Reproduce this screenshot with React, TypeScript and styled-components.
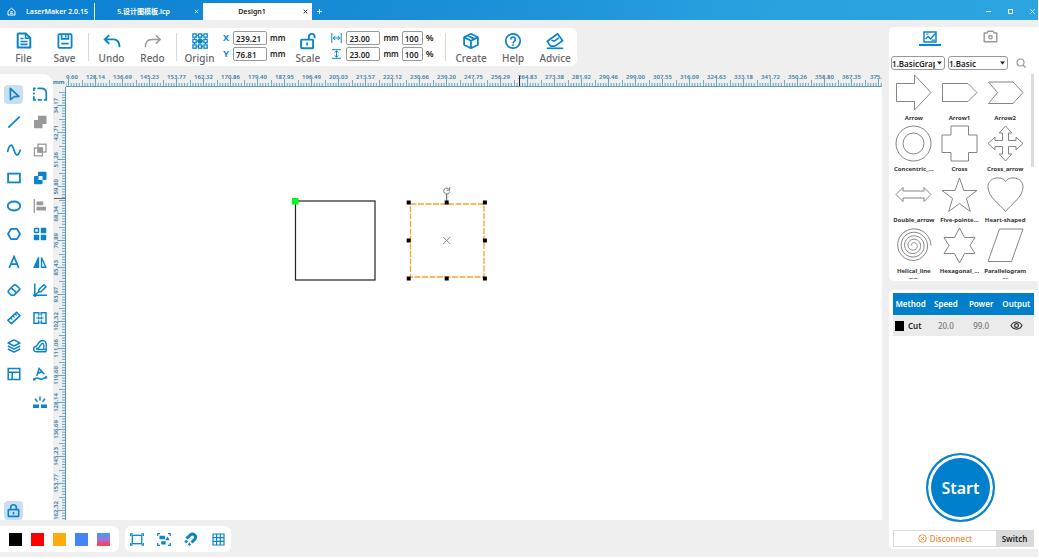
import React from "react";
import styled, { createGlobalStyle } from "styled-components";

const blue = "#0a84cc";
const grey = "#9a9a9a";

const GlobalStyle = createGlobalStyle`
  * { box-sizing: border-box; }
  body {
    margin: 0;
    background: #fff;
    font-family: "Noto Sans", "Noto Sans CJK SC", sans-serif;
    color: #222;
  }
  button, input, select { font-family: inherit; margin: 0; padding: 0; }
  button { border: 0; background: none; cursor: pointer; }
  svg { display: block; flex: none; }
`;

const Shell = styled.div`
  display: flex;
  flex-direction: column;
  height: 100vh;
  min-height: 480px;
  border: solid #fff;
  border-width: 0 1px 2px 0;
  background: #efefef;
  overflow: hidden;
`;

/* ---------- title bar ---------- */

const TitleBar = styled.header`
  display: flex;
  flex: none;
  align-items: flex-end;
  height: 20px;
  background: linear-gradient(100deg, #0b7fd1 0%, #1d92d9 50%, #2aa2df 75%, #2ba4e0 100%);
  color: #fff;
`;

const AppName = styled.div`
  display: flex;
  align-items: center;
  gap: 10px;
  width: 95px;
  height: 17px;
  padding-left: 7px;
  border-right: 1px solid #e8f4fc;
  font-size: 7px;
  font-weight: 600;
  white-space: nowrap;
`;

const DocTab = styled.div<{ $active?: boolean }>`
  display: flex;
  align-items: center;
  width: ${(p) => (p.$active ? 109 : 108)}px;
  height: 17px;
  padding-right: 2px;
  background: ${(p) => (p.$active ? "#fff" : "transparent")};
  color: ${(p) => (p.$active ? "#222" : "#fff")};
`;

const DocName = styled.button`
  flex: 1;
  color: inherit;
  font-size: 7px;
  font-weight: 600;
  line-height: 17px;
  text-align: center;
`;

const TinyButton = styled.button`
  display: grid;
  place-items: center;
  width: 9px;
  height: 17px;
  color: inherit;
`;

const AddTab = styled(TinyButton)`
  margin-left: 3px;
`;

const WindowButtons = styled.div`
  display: flex;
  gap: 13px;
  margin-left: auto;
  padding-right: 1px;
`;

/* ---------- page areas ---------- */

const Body = styled.div`
  display: flex;
  flex: 1;
  gap: 7px;
  min-height: 0;
`;

const MainColumn = styled.main`
  display: flex;
  flex: 1;
  flex-direction: column;
  min-width: 0;
`;

/* ---------- ribbon ---------- */

const Ribbon = styled.div`
  display: flex;
  flex: none;
  align-items: center;
  align-self: flex-start;
  height: 38px;
  margin: 8px 0 5px;
  padding: 0 0 0 3px;
  border-radius: 0 6px 6px 0;
  background: #fff;
`;

const RibbonButton = styled.button`
  display: flex;
  flex-direction: column;
  align-items: center;
  gap: 1px;
  width: 41px;
  padding-top: 3px;
  color: #666;
  font-size: 10px;
  font-weight: 500;
  line-height: 14px;
`;

const HelpGroup = styled.div`
  display: flex;
  gap: 1px;
  padding: 0 1px 0 3px;
`;

const Divider = styled.span`
  width: 1px;
  height: 28px;
  margin: 0 2px 0 3px;
  background: #d9d9d9;
`;

const FieldStack = styled.div<{ $wide?: boolean }>`
  display: grid;
  gap: 2px;
  padding: 0 ${(p) => (p.$wide ? 8 : 2)}px 2px 2px;
`;

const Field = styled.label`
  display: flex;
  align-items: center;
  gap: 3px;
  font-size: 8px;
  font-weight: 600;
  line-height: 14px;
`;

const FieldName = styled.span`
  width: 8px;
  color: ${blue};
  font-size: 9px;
  font-weight: 700;
  text-align: center;
`;

const FieldIcon = styled.span`
  display: grid;
  justify-items: center;
  width: 13px;
`;

const Percent = styled.span`
  font-size: 9px;
`;

const NumberBox = styled.input<{ $short?: boolean }>`
  width: ${(p) => (p.$short ? 21 : 34)}px;
  height: 14px;
  padding-left: 2px;
  border: 1px solid #999;
  border-radius: 2px;
  color: #222;
  font-size: 8px;
  font-weight: 600;
`;

/* ---------- workspace ---------- */

const Workspace = styled.div`
  display: flex;
  flex: 1;
  min-height: 0;
`;

const ToolPanel = styled.aside`
  display: flex;
  flex: none;
  flex-direction: column;
  justify-content: space-between;
  width: 53px;
  margin-top: 3px;
  padding: 6px 0 0;
  border-radius: 0 10px 0 0;
  background: #fff;
`;

const ToolGrid = styled.div`
  display: grid;
  grid-template-columns: 27px 26px;
  grid-auto-rows: 28px;
`;

const ToolButton = styled.button<{ $on?: boolean }>`
  display: grid;
  place-items: center;
  place-self: center;
  width: 19px;
  height: 19px;
  border-radius: 4px;
  background: ${(p) => (p.$on ? "#c9dff0" : "transparent")};
`;

const LockRow = styled.div`
  display: grid;
  width: 27px;
`;

const Board = styled.div`
  display: grid;
  flex: 1;
  grid-template-columns: 13px 1fr;
  grid-template-rows: 16px 1fr;
  min-width: 0;
  overflow: hidden;
`;

const rulerBlue = "#3b7d9e";

const Unit = styled.span`
  align-self: end;
  color: ${rulerBlue};
  font-size: 6px;
  font-weight: 700;
  line-height: 10px;
`;

const TopRuler = styled.div`
  position: relative;
  display: flex;
  min-width: 0;
  overflow: hidden;
  border-bottom: 1px solid #5b9aba;
`;

const SideRuler = styled.div`
  position: relative;
  display: flex;
  flex-direction: column;
  min-height: 0;
  overflow: hidden;
  padding-top: 5px;
  border-right: 1px solid #5b9aba;
`;

const TopCell = styled.div<{ $edge?: "start" | "end" }>`
  display: flex;
  flex: none;
  flex-direction: column;
  align-items: ${(p) => (p.$edge === "start" ? "flex-end" : "center")};
  justify-content: flex-end;
  width: ${(p) => (p.$edge === "start" ? 16 : 27)}px;

  > span {
    align-self: ${(p) => (p.$edge ? "flex-start" : "center")};
    padding-left: ${(p) => (p.$edge === "end" ? 5 : 0)}px;
  }
`;

const SideCell = styled.div`
  display: flex;
  flex: none;
  align-items: center;
  justify-content: flex-end;
  height: 27px;
`;

const TopLabel = styled.span`
  margin-bottom: -2px;
  color: ${rulerBlue};
  font-size: 6px;
  font-weight: 600;
  line-height: 8px;
`;

const SideLabel = styled.span`
  margin-right: -2px;
  color: ${rulerBlue};
  font-size: 6px;
  font-weight: 600;
  line-height: 7px;
  writing-mode: vertical-rl;
  rotate: 180deg;
`;

const TopMarker = styled.i`
  position: absolute;
  left: 453px;
  top: 5px;
  width: 1px;
  height: 11px;
  background: #222;
`;

const SideMarker = styled.i`
  position: absolute;
  top: 111px;
  left: 1px;
  width: 12px;
  height: 1px;
  background: #666;
`;

const Canvas = styled.div`
  min-height: 0;
  overflow: hidden;
  background: #fff;
`;

/* ---------- footer ---------- */

const Footer = styled.footer`
  display: flex;
  flex: none;
  gap: 6px;
  padding: 6px 0 5px;
`;

const FooterGroup = styled.div<{ $tools?: boolean }>`
  display: flex;
  align-items: center;
  gap: 9px;
  height: 26px;
  padding: ${(p) => (p.$tools ? "0 4px 0 3px" : "0 9px")};
  border-radius: ${(p) => (p.$tools ? "6px" : "0 6px 6px 0")};
  background: #fff;
`;

const Swatch = styled.button<{ $fill: string }>`
  width: 13px;
  height: 13px;
  background: ${(p) => p.$fill};
`;

const FooterTool = styled.button`
  display: grid;
  place-items: center;
  width: 18px;
  height: 18px;
`;

/* ---------- right side ---------- */

const SideColumn = styled.aside`
  display: flex;
  flex: none;
  flex-direction: column;
  gap: 9px;
  width: 149px;
  padding: 7px 0 8px;
`;

const Panel = styled.section<{ $grow?: boolean }>`
  display: flex;
  flex-direction: column;
  flex: ${(p) => (p.$grow ? "1" : "none")};
  height: ${(p) => (p.$grow ? "auto" : "254px")};
  min-height: 0;
  padding: ${(p) => (p.$grow ? "3px 4px 2px" : "0 4px 2px 2px")};
  border-radius: 5px 0 0 5px;
  background: #fff;
`;

const PanelTabs = styled.div`
  display: flex;
  justify-content: center;
  gap: 38px;
  padding-right: 5px;
`;

const PanelTab = styled.button<{ $on?: boolean }>`
  display: grid;
  place-items: center;
  width: 22px;
  height: 19px;
  padding-top: 2px;
  border-bottom: 2px solid ${(p) => (p.$on ? blue : "transparent")};
`;

const FilterRow = styled.div`
  display: flex;
  align-items: center;
  gap: 3px;
  margin-top: 10px;
`;

const SelectWrap = styled.span<{ $wide?: boolean }>`
  position: relative;
  display: block;
  width: ${(p) => (p.$wide ? 60 : 54)}px;

  svg {
    position: absolute;
    top: 5px;
    right: 3px;
    pointer-events: none;
  }
`;

const Select = styled.select`
  display: block;
  width: 100%;
  height: 14px;
  padding: 0 9px 0 0;
  border: 1px solid #999;
  border-radius: 3px;
  appearance: none;
  background: #fff;
  color: #222;
  font-size: 8px;
  font-weight: 600;
`;

const SearchButton = styled.button`
  margin-left: 5px;
`;

const ShapeArea = styled.div`
  display: flex;
  flex: 1;
  min-height: 0;
  margin-top: 4px;
  overflow: hidden;
`;

const ShapeGrid = styled.div`
  display: grid;
  flex: 1;
  grid-template-columns: repeat(3, 1fr);
  grid-auto-rows: 51px;
  min-width: 0;
`;

const ShapeButton = styled.button`
  display: flex;
  flex-direction: column;
  align-items: center;
  justify-content: flex-start;
  color: #333;
  font-size: 6px;
  font-weight: 700;
  line-height: 14px;
  white-space: nowrap;
`;

const ScrollThumb = styled.span`
  flex: none;
  width: 3px;
  height: 93px;
  margin-left: 3px;
  background: #dcdcdc;
`;

const LayerTable = styled.table`
  width: 100%;
  border-collapse: collapse;
  table-layout: fixed;
  font-size: 8px;

  th {
    height: 22px;
    padding: 0 0 1px;
    background: #0080cc;
    color: #fff;
    font-weight: 600;
  }
  td {
    height: 21px;
    padding: 0;
    background: #ebebeb;
    color: #777;
    font-weight: 500;
    text-align: center;
  }
`;

const MethodCell = styled.span`
  display: flex;
  align-items: center;
  gap: 4px;
  padding-left: 2px;
  color: #222;
  font-weight: 600;

  &::before {
    content: "";
    width: 9px;
    height: 10px;
    background: #000;
  }
`;

const EyeButton = styled.button`
  display: block;
  margin: 0 auto;
`;

const StartArea = styled.div`
  display: grid;
  flex: 1;
  place-items: end center;
  padding: 0 6px 8px 0;
`;

const StartButton = styled.button`
  width: 69px;
  height: 69px;
  border: 2px solid ${blue};
  border-radius: 50%;
  background: #0080cc;
  box-shadow: inset 0 0 0 3px #fff;
  color: #fff;
  font-size: 16px;
  font-weight: 600;
`;

const ConnectRow = styled.div`
  display: flex;
  flex: none;
  height: 17px;
  border: 1px solid #dadada;
  background: #fff;
`;

const Disconnect = styled.button`
  display: flex;
  flex: 1;
  align-items: center;
  justify-content: center;
  gap: 3px;
  color: #f58233;
  font-size: 8px;
  font-weight: 500;
`;

const SwitchButton = styled.button`
  width: 37px;
  background: #dadada;
  color: #222;
  font-size: 8px;
  font-weight: 600;
`;

/* ---------- drawings ---------- */

type IconProps = { w: number; h?: number; c?: string; s?: number; children: React.ReactNode };

const Icon = ({ w, h = w, c = blue, s = 2, children }: IconProps) => (
  <svg width={w} height={h} viewBox={`0 0 ${w} ${h}`} fill="none" stroke={c} strokeWidth={s} aria-hidden="true">
    {children}
  </svg>
);

const ribbonIcons: Record<string, React.ReactNode> = {
  File: (
    <Icon w={18}>
      <path d="M10.8 1.500H3.700a1 1 0 0 0-1 1v13h12.600V6z" strokeLinejoin="round" />
      <path d="M10.500 1.500v4.800h4.800" strokeWidth={1.500} />
      <path d="M5.500 6.500h3M5.500 9.500h7M5.500 12.400h7" strokeWidth={1.700} />
    </Icon>
  ),
  Save: (
    <Icon w={18} s={1.800}>
      <rect x="2.400" y="2.200" width="13.200" height="13.600" rx="1" />
      <path d="M5.600 2.500v4.400h6.800V2.500M9.700 3.200v2.400M5.300 11.700h7.400" strokeWidth={1.700} />
    </Icon>
  ),
  Undo: (
    <Icon w={18} s={1.900}>
      <path d="M6.200 3.200 1.800 7.400l4.400 4.300M2 7.400h8.400c3.700 0 6.200 2.700 6.200 7.800" />
    </Icon>
  ),
  Redo: (
    <Icon w={18} s={1.500} c={grey}>
      <path d="m11.800 3.200 4.400 4.200-4.400 4.300M16 7.400H7.600c-3.700 0-6.200 2.700-6.200 7.800" />
    </Icon>
  ),
  Origin: (
    <Icon w={18} s={1.300}>
      {[1.3, 6.8, 12.3].map((y) =>
        [1.3, 6.8, 12.3].map((x) => (
          <rect key={`${x}-${y}`} x={x + 0.6} y={y + 0.6} width="3.300" height="3.300" fill={x === 6.8 && y === 6.8 ? blue : "none"} />
        ))
      )}
      <path d="M6.200 3.500h1M11 3.500h1M6.200 14.500h1M11 14.500h1M3.500 6.200v1M14.500 6.200v1M3.500 11v1M14.500 11v1M9 6v1M9 11v1M6 9h1M11 9h1" />
    </Icon>
  ),
  Scale: (
    <Icon w={18} s={1.900}>
      <rect x="2.100" y="7.600" width="12" height="8.600" rx=".6" />
      <path d="M9.800 7.400V4.800a2.900 2.900 0 0 1 5.800 0v1.400" />
      <path d="M8.100 10.500v3" strokeWidth={1.700} />
    </Icon>
  ),
  Create: (
    <Icon w={18} s={1.800}>
      <path d="m9 1.800 6.900 3.400v7.600L9 16.200l-6.900-3.400V5.200zM2.300 5.400 9 8.700l6.700-3.300M9 8.700v7.300M5.500 3.500l6.900 3.400" strokeLinejoin="round" />
    </Icon>
  ),
  Help: (
    <Icon w={18} s={1.700}>
      <circle cx="9" cy="9" r="7.200" />
      <path d="M6.700 7.400a2.300 2.300 0 1 1 3.800 1.700c-.9.700-1.500 1-1.500 2.100M9 12.300v1.500" />
    </Icon>
  ),
  Advice: (
    <Icon w={20} h={18} s={1.700}>
      <path d="M12.600 1.700 2.300 9.200l3.300 4.900h4.200l7.800-5.400z" strokeLinejoin="round" />
      <path d="m6.500 8.200 2.800 1 4.600-3.400" strokeWidth={1.600} />
      <path d="M1.800 16.300h16.400" />
    </Icon>
  ),
};

const RibbonTool = ({ name }: { name: string }) => (
  <RibbonButton>
    {ribbonIcons[name]}
    {name}
  </RibbonButton>
);

const tools: { name: string; icon: React.ReactNode; on?: boolean }[] = [
  { name: "Select", on: true, icon: <Icon w={16} s={1.700}><path d="m4.300 2.300 8.500 8.100-4.500.3-3.800 3z" strokeLinejoin="round" /></Icon> },
  {
    name: "Round corner",
    icon: <Icon w={16} s={1.700}><path d="M5.500 2.300h3.800c3.200 0 5 2 5 5v6.500h-2.500M1.900 5V2.300h1.800M1.900 6.500v2M1.900 10.200v3.600h2M5.800 13.800h4" /></Icon>,
  },
  { name: "Line", icon: <Icon w={16} s={1.800}><path d="M2.300 13.600 13.700 2.600" /></Icon> },
  { name: "Union", icon: <Icon w={16} c="none"><path d="M6 1.700h8.500v8.300h-4v4.300H2V6h4z" fill={grey} /></Icon> },
  { name: "Curve", icon: <Icon w={16} s={1.700}><path d="M1.700 9.500C3.500 1.500 6 1.500 7.800 7.500s3.900 8 6.500.7" strokeLinecap="round" /></Icon> },
  {
    name: "Intersect",
    icon: <Icon w={16} c={grey} s={1.300}><rect x="6" y="2.200" width="8" height="7.800" /><rect x="2.400" y="6" width="8" height="7.800" /><path d="M6 6h4.400v4H6z" fill={grey} /></Icon>,
  },
  { name: "Rectangle", icon: <Icon w={16} s={1.800}><rect x="2.100" y="3.600" width="11.800" height="8.800" /></Icon> },
  {
    name: "Exclude",
    icon: (
      <Icon w={16} c="none">
        <path d="M7 1.700h6.500a1 1 0 0 1 1 1V9a1 1 0 0 1-1 1h-3v3.300a1 1 0 0 1-1 1H3a1 1 0 0 1-1-1V7a1 1 0 0 1 1-1h3V2.700a1 1 0 0 1 1-1z" fill={blue} />
        <path d="M6.500 6h4v4h-4z" fill="#fff" />
      </Icon>
    ),
  },
  { name: "Ellipse", icon: <Icon w={16} s={1.800}><ellipse cx="8" cy="8" rx="6.300" ry="4.500" /></Icon> },
  { name: "Align", icon: <Icon w={16} c={grey} s={1.300}><path d="M2.300 1v14" /><path d="M4.500 5.400h6.800M4.500 10.600h9.500" strokeWidth={3.600} /></Icon> },
  { name: "Polygon", icon: <Icon w={16} s={1.800}><path d="M5 2.900h6L14 8l-3 5.100H5L2 8z" strokeLinejoin="round" /></Icon> },
  {
    name: "Array",
    icon: <Icon w={16} s={1.500}><rect x="2.500" y="2.500" width="4" height="4" rx=".5" /><path d="M9.500 2.500h4v4h-4zM2.500 9.500h4v4h-4zM9.500 9.500h4v4h-4z" fill={blue} strokeLinejoin="round" /></Icon>,
  },
  { name: "Text", icon: <Icon w={16} s={1.700}><path d="M3.200 14 8 2.600 12.800 14M4.900 10.200h6.200" /></Icon> },
  { name: "Mirror", icon: <Icon w={16} s={1.400}><path d="M6.500 3.500v9.800H2.200z" fill={blue} /><path d="M9.500 3.500v9.800h4.300z" /></Icon> },
  {
    name: "Eraser",
    icon: <Icon w={16} s={1.600}><path d="m2.300 8.800 6-6a1 1 0 0 1 1.300 0l4 3.700a1 1 0 0 1 0 1.200l-5.800 5.600H5.200L2.300 10.300zM5.300 5.900l5.200 4.900" strokeLinejoin="round" /></Icon>,
  },
  {
    name: "Edit nodes",
    icon: (
      <Icon w={16} s={1.500}>
        <path d="M2.800 1.500v11.700H15" />
        <circle cx="2.900" cy="13.200" r="1.700" fill={blue} stroke="none" />
        <path d="m6.600 9.900.4-2.700 4.800-4.500 2.200 2.100-4.700 4.700zM3.500 12.500l3.200-2.700" strokeLinejoin="round" />
      </Icon>
    ),
  },
  {
    name: "Measure",
    icon: <Icon w={16} s={1.600}><path d="m1.900 10.300 8.700-8 3.500 3.400-8.700 8z" strokeLinejoin="round" /><path d="m4.800 8 1.500 1.500M7 6l1.500 1.500M9.200 4l1.500 1.500" strokeWidth={1.200} /></Icon>,
  },
  {
    name: "Join",
    icon: <Icon w={16} s={1.500}><path d="M6.800 5.500V2.700H2v10.600h4.800v-2.800M9.200 5.500V2.700H14v10.600H9.200v-2.800" /><path d="M4.300 8h7.400M6.700 6.500v3M9.300 6.500v3" strokeWidth={1.200} /></Icon>,
  },
  {
    name: "Layers",
    icon: <Icon w={16} s={1.500}><path d="M8 1.900 13.900 5 8 8 2.100 5zM1.900 8 8 11.100 14.100 8M1.900 11 8 14.100l6.100-3.100" strokeLinejoin="round" /></Icon>,
  },
  {
    name: "Offset",
    icon: (
      <Icon w={16} s={1.400}>
        <path d="M14 13.800H5C.8 13.800.6 8.800 4.300 8.200L7 4.500c2.500-3.400 7.200-2.300 7.200 1.800v7.500" />
        <path d="M14 11.500H5.500c-1.200 0-1.200-1.400 0-1.400h1l2.800-3.900c1-1.300 2.500-.6 2.500.8v4.500" strokeWidth={1.300} />
      </Icon>
    ),
  },
  { name: "Template", icon: <Icon w={16} s={1.500}><path d="M2.200 2.600h11.600v11H2.200zM2.200 6.200h11.600M6.200 6.200v7.400" /></Icon> },
  {
    name: "Text on path",
    icon: (
      <Icon w={16} s={1.500}>
        <path d="m4.800 10 2.300-7.500 5.200 5.800M6 7.200l3.800-1.500" />
        <path d="M2.400 13.200c3-3.200 4.500.5 7.500 0 1.600-.3 1.900-1.700 4.100-1.800" />
        <path d="M1 12.200h2.400v2.200H1zM13 10.300h2.200v2.200H13z" fill={blue} stroke="none" />
      </Icon>
    ),
  },
];

const Explode = () => (
  <Icon w={16} s={1.500}><path d="M1 12.300h6M9 12.300h6" strokeWidth={3.400} /><path d="M8 2.600v4M3 4.800l2.500 3M13 4.800l-2.500 3" /></Icon>
);

const TopTicks = () => (
  <svg width="27" height="7" viewBox="0 0 27 7" stroke="#5b9aba" strokeWidth=".9" aria-hidden="true">
    <path d="M.4 1v6M3 4v3M5.700 4v3M8.400 4v3M11 4v3M13.500 0v7M16.200 4v3M18.900 4v3M21.600 4v3M24.300 4v3" />
  </svg>
);

const SideTicks = () => (
  <svg width="7" height="27" viewBox="0 0 7 27" stroke="#5b9aba" strokeWidth=".9" aria-hidden="true">
    <path d="M1 .4h6M4 3h3M4 5.700h3M4 8.400h3M4 11h3M0 13.500h7M4 16.200h3M4 18.900h3M4 21.600h3M4 24.300h3" />
  </svg>
);

const topMarks = [
  "9.60", "128.14", "136.69", "145.23", "153.77", "162.32", "170.86", "179.40", "187.95", "196.49", "205.03",
  "213.57", "222.12", "230.66", "239.20", "247.75", "256.29", "264.83", "273.38", "281.92", "290.46", "299.00",
  "307.55", "316.09", "324.63", "333.18", "341.72", "350.26", "358.80", "367.35", "375.",
];

const sideMarks = [
  "34.17", "42.71", "51.26", "59.80", "68.34", "76.89", "85.43", "93.97", "102.52", "111.06", "119.60", "128.14",
  "136.69", "145.23", "153.77", "162.32",
];

const edgeOf = (i: number) => (i === 0 ? "start" : i === topMarks.length - 1 ? "end" : undefined);

const Artwork = () => (
  <svg width="816" height="433" viewBox="66 87 816 433" fill="none" role="img" aria-label="Drawing with two squares">
    <rect x="295.500" y="201" width="79.500" height="79" stroke="#222" strokeWidth="1.200" />
    <path d="M292 198h6.500v6.500H292z" fill="#00f81b" />
    <rect x="410.500" y="204" width="73.500" height="73" stroke="#f9a52c" strokeWidth="1.300" strokeDasharray="6 1.500" />
    <path d="M446.700 194v8" stroke="#555" />
    <path d="M449.300 189.500a3 3 0 1 0 .4 2M449.700 187.300v2.900h-3" stroke="#666" strokeWidth=".9" />
    <path d="m443.200 237 7 7m0-7-7 7" stroke="#777" strokeWidth=".9" />
    {[202.5, 240.5, 278.5].map((y) =>
      [408.7, 446.7, 484.9].map((x) =>
        x === 446.7 && y === 240.5 ? null : <rect key={`${x}-${y}`} x={x - 2} y={y - 2} width="4" height="4" fill="#000" />
      )
    )}
  </svg>
);

const spiral = Array.from({ length: 161 }, (_, i) => {
  const turn = (i / 160) * Math.PI * 9;
  const radius = 2 + (i / 160) * 15.5;
  const x = 18.5 + radius * Math.cos(turn + Math.PI);
  const y = 18.5 + radius * Math.sin(turn + Math.PI);
  return `${i ? "L" : "M"}${x.toFixed(1)} ${y.toFixed(1)}`;
}).join("");

const shapes: [string, React.ReactNode][] = [
  ["Arrow", <path d="M1.500 9.500h18V1L36 18.500 19.500 36v-8.500h-18z" />],
  ["Arrow1", <path d="M1.500 9.500H27l9 9-9 9H1.500z" />],
  ["Arrow2", <path d="M1.500 8H26l10 10.500L26 29.500H1.500l9-11z" />],
  ["Concentric_...", <><circle cx="18.500" cy="18.500" r="17.500" /><circle cx="18.500" cy="18.500" r="10.500" /></>],
  ["Cross", <path d="M10 1h17.500v9H36v17.500h-8.500V36H10v-8.500H1V10h9z" />],
  ["Cross_arrow", <path d="m18.500 1 6.300 7h-3.300v7.500H29v-3.300l7 6.300-7 6.300v-3.300h-7.500V29h3.300l-6.300 7-6.300-7h3.300v-7.500H8v3.300l-7-6.300 7-6.300v3.300h7.500V8h-3.300z" />],
  ["Double_arrow", <path d="m1 18.500 7-7V15h21v-3.500l7 7-7 7V22H8v3.500z" />],
  ["Five-pointe...", <path d="m18.500 2 4.400 12.500H36l-10.600 8 3.900 13-10.800-8-10.800 8 3.900-13L1 14.500h13.100z" />],
  ["Heart-shaped", <path d="M18.500 35.500C12 27.500 1 21 1 10.800 1 1.500 14-1 18.500 5.500 23-1 36 1.500 36 10.800 36 21 25 27.500 18.500 35.500z" />],
  ["Helical_line", <path d={spiral} />],
  ["Hexagonal_...", <path d="m18.500 1 5 9.500H34L29 18.500l5 8H23.500L18.500 36l-5-9.500H3l5-8-5-8h10.500z" />],
  ["Parallelogram", <path d="M12.500 2H36L24.500 34.500H1z" />],
];

const Caret = () => (
  <svg width="5" height="4" viewBox="0 0 5 4" aria-hidden="true"><path d="M0 .5h5l-2.500 3z" fill="#222" /></svg>
);

export default function App() {
  return (
    <>
      <GlobalStyle />
      <Shell>
        <TitleBar>
          <AppName>
            <Icon w={9} c="#fff" s={1}><path d="M1 4.300 4.500 1.200 8 4.300V8H1zM3 6.200h3M3.500 4.700h2" /></Icon>
            LaserMaker 2.0.15
          </AppName>
          <DocTab>
            <DocName>5.设计图模板.lcp</DocName>
            <TinyButton aria-label="Close template"><Icon w={5} c="#fff" s={0.8}><path d="m.8.8 3.400 3.400m0-3.400L.8 4.200" /></Icon></TinyButton>
          </DocTab>
          <DocTab $active>
            <DocName>Design1</DocName>
            <TinyButton aria-label="Close Design1"><Icon w={5} c="#222" s={0.9}><path d="m.7.7 3.600 3.600m0-3.600L.7 4.300" /></Icon></TinyButton>
          </DocTab>
          <AddTab aria-label="New tab"><Icon w={5} c="#fff" s={1}><path d="M2.500 0v5M0 2.500h5" /></Icon></AddTab>
          <WindowButtons>
            <TinyButton aria-label="Minimise"><Icon w={5} c="#fff" s={1}><path d="M0 2.500h5" /></Icon></TinyButton>
            <TinyButton aria-label="Maximise"><Icon w={5} c="#fff" s={1}><path d="M.5.5h4v4h-4z" /></Icon></TinyButton>
            <TinyButton aria-label="Close"><Icon w={5} c="#fff" s={0.9}><path d="m.3.3 4.400 4.400m0-4.400L.3 4.700" /></Icon></TinyButton>
          </WindowButtons>
        </TitleBar>

        <Body>
          <MainColumn>
            <Ribbon>
              <RibbonTool name="File" />
              <RibbonTool name="Save" />
              <Divider />
              <RibbonTool name="Undo" />
              <RibbonTool name="Redo" />
              <Divider />
              <RibbonTool name="Origin" />
              <FieldStack>
                <Field><FieldName>X</FieldName><NumberBox defaultValue="239.21" />mm</Field>
                <Field><FieldName>Y</FieldName><NumberBox defaultValue="76.81" />mm</Field>
              </FieldStack>
              <RibbonTool name="Scale" />
              <FieldStack $wide>
                <Field>
                  <FieldIcon><Icon w={11} h={10} s={1}><path d="M.8 0v10M10.200 0v10M2.500 5h6M4.200 3 2.300 5l1.900 2M6.800 3l1.900 2-1.900 2" /></Icon></FieldIcon>
                  <NumberBox aria-label="Width" defaultValue="23.00" />mm
                  <NumberBox $short aria-label="Width percent" defaultValue="100" /><Percent>%</Percent>
                </Field>
                <Field>
                  <FieldIcon><Icon w={11} h={10} s={1}><path d="M1 .7h9M1 9.300h9M5.500 2v6M3.500 3.700l2-1.900 2 1.900M3.500 6.300l2 1.900 2-1.900" /></Icon></FieldIcon>
                  <NumberBox aria-label="Height" defaultValue="23.00" />mm
                  <NumberBox $short aria-label="Height percent" defaultValue="100" /><Percent>%</Percent>
                </Field>
              </FieldStack>
              <Divider />
              <HelpGroup>
                <RibbonTool name="Create" />
                <RibbonTool name="Help" />
                <RibbonTool name="Advice" />
              </HelpGroup>
            </Ribbon>

            <Workspace>
              <ToolPanel>
                <ToolGrid>
                  {tools.map((t) => (
                    <ToolButton key={t.name} $on={t.on} aria-label={t.name}>{t.icon}</ToolButton>
                  ))}
                  <span />
                  <ToolButton aria-label="Explode"><Explode /></ToolButton>
                </ToolGrid>
                <LockRow>
                  <ToolButton $on aria-label="Lock">
                    <Icon w={15} s={1.600}><rect x="2.300" y="6.600" width="10.400" height="6.800" rx=".4" /><path d="M4.700 6.500V4.600a2.800 2.800 0 0 1 5.600 0v1.900M7.500 9v2.500" /></Icon>
                  </ToolButton>
                </LockRow>
              </ToolPanel>
              <Board>
                <Unit>mm</Unit>
                <TopRuler>
                  {topMarks.map((m, i) => (
                    <TopCell key={m} $edge={edgeOf(i)}><TopLabel>{m}</TopLabel><TopTicks /></TopCell>
                  ))}
                  <TopMarker />
                </TopRuler>
                <SideRuler>
                  {sideMarks.map((m) => (
                    <SideCell key={m}><SideLabel>{m}</SideLabel><SideTicks /></SideCell>
                  ))}
                  <SideMarker />
                </SideRuler>
                <Canvas><Artwork /></Canvas>
              </Board>
            </Workspace>

            <Footer>
              <FooterGroup>
                {["#000", "#f00", "#ffab0f", "#4484f4", "linear-gradient(#2fa5e8, #a56fe0 50%, #f4485a 85%)"].map((c) => (
                  <Swatch key={c} $fill={c} aria-label={`Layer colour ${c}`} />
                ))}
              </FooterGroup>
              <FooterGroup $tools>
                <FooterTool aria-label="Fit frame">
                  <Icon w={14} h={13} s={1.300}><rect x="2.300" y="2.300" width="9.400" height="8.400" /><path d="M.7 3V.8h2M11.300.8h2V3M.7 10v2.200h2M11.300 12.200h2V10" /></Icon>
                </FooterTool>
                <FooterTool aria-label="Fit selection">
                  <Icon w={14} h={13} s={1.200}><path d="M.7 3V.7H3M11 .7h2.300V3M.7 10v2.300H3M11 12.300h2.300V10" /><path d="M2.500 2.800h5.500v3.400H2.500zM10.500 3.500l2.200 3.800H8.300zM4.200 8.300h4.500v3.200H4.200z" fill={blue} stroke="none" /></Icon>
                </FooterTool>
                <FooterTool aria-label="Snap">
                  <Icon w={14} h={14} s={3}><path d="M2.500 6.500 6.200 3c3-2.700 7 1.200 4.600 4.200l-3.300 3.300" /><path d="M.5 9.500h3.400M2.200 8v3.300M4 12.300h2.800M5.500 10.800v3" strokeWidth={1.300} /></Icon>
                </FooterTool>
                <FooterTool aria-label="Grid">
                  <Icon w={13} s={1.200}><path d="M1 1h11v11H1zM4.600 1v11M8.300 1v11M1 4.600h11M1 8.300h11" /></Icon>
                </FooterTool>
              </FooterGroup>
            </Footer>
          </MainColumn>

          <SideColumn>
            <Panel>
              <PanelTabs>
                <PanelTab $on aria-label="Shape library">
                  <Icon w={14} h={12} s={1.500}><path d="M1 1h12v10H1z" /><path d="m2.500 8 2.700-2.500L7.500 8l5-5.500" /><path d="M3 3h2.500M8.500 9.200h3.500" strokeWidth={1.200} /></Icon>
                </PanelTab>
                <PanelTab aria-label="Camera">
                  <Icon w={15} h={13} s={1.400} c={grey}><path d="M1.200 3h2.600L5 1.200h5L11.200 3h2.600v8.800H1.200z" strokeLinejoin="round" /><circle cx="7.500" cy="7.200" r="1.700" /></Icon>
                </PanelTab>
              </PanelTabs>
              <FilterRow>
                <SelectWrap>
                  <Select aria-label="Category"><option>1.BasicGraphics</option></Select>
                  <Caret />
                </SelectWrap>
                <SelectWrap $wide>
                  <Select aria-label="Group"><option>1.Basic</option></Select>
                  <Caret />
                </SelectWrap>
                <SearchButton aria-label="Search">
                  <Icon w={10} s={1.200} c={grey}><circle cx="4.500" cy="4.500" r="3.500" /><path d="m7 7 2.500 2.500" /></Icon>
                </SearchButton>
              </FilterRow>
              <ShapeArea>
                <ShapeGrid>
                  {shapes.map(([name, art]) => (
                    <ShapeButton key={name}>
                      <Icon w={37} s={0.9} c="#777">{art}</Icon>
                      {name}
                    </ShapeButton>
                  ))}
                  <ShapeButton aria-label="Ring"><Icon w={37} s={0.9} c="#777"><circle cx="18.500" cy="11" r="11" /></Icon></ShapeButton>
                  <span />
                  <ShapeButton aria-label="Pin"><Icon w={37} s={0.9} c="#777"><circle cx="18.500" cy="4" r="4" /></Icon></ShapeButton>
                </ShapeGrid>
                <ScrollThumb />
              </ShapeArea>
            </Panel>

            <Panel $grow>
              <LayerTable>
                <thead>
                  <tr><th>Method</th><th>Speed</th><th>Power</th><th>Output</th></tr>
                </thead>
                <tbody>
                  <tr>
                    <td><MethodCell>Cut</MethodCell></td>
                    <td>20.0</td>
                    <td>99.0</td>
                    <td>
                      <EyeButton aria-label="Toggle output">
                        <Icon w={13} h={9} s={1.200} c="#333"><path d="M1 4.500C3.500-.2 9.500-.2 12 4.500 9.500 9.200 3.500 9.200 1 4.500z" /><circle cx="6.500" cy="4.500" r="1.900" /></Icon>
                      </EyeButton>
                    </td>
                  </tr>
                </tbody>
              </LayerTable>
              <StartArea><StartButton>Start</StartButton></StartArea>
              <ConnectRow>
                <Disconnect>
                  <Icon w={9} s={0.9} c="#f58233"><circle cx="4.500" cy="4.500" r="3.800" /><path d="m2.900 2.900 3.200 3.200m0-3.200L2.900 6.100" /></Icon>
                  Disconnect
                </Disconnect>
                <SwitchButton>Switch</SwitchButton>
              </ConnectRow>
            </Panel>
          </SideColumn>
        </Body>
      </Shell>
    </>
  );
}
